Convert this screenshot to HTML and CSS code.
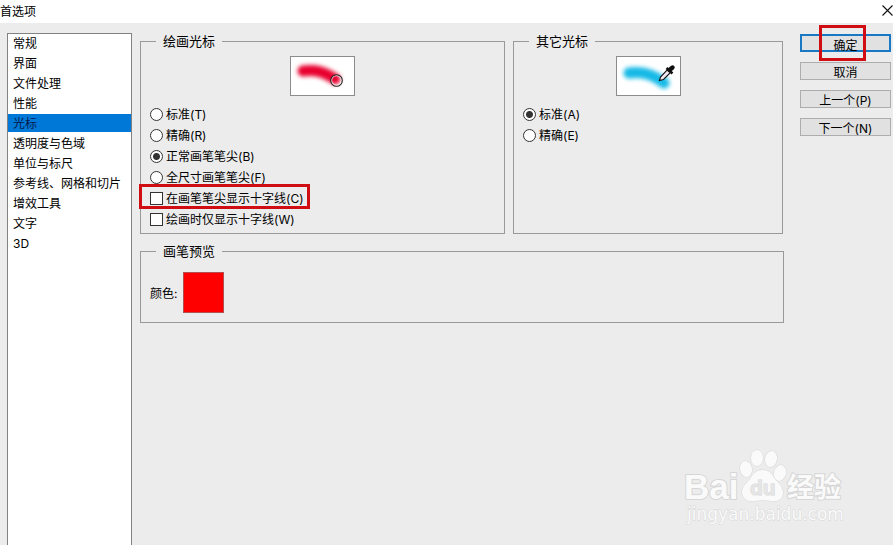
FILE: index.html
```html
<!DOCTYPE html>
<html lang="zh-CN">

<head>
    <meta charset="UTF-8">
    <title>首选项</title>
    <link rel="stylesheet" href="styles.css">
</head>

<body>
    <header class="titlebar">
        <h1>首选项</h1>
        <button type="button" class="close" aria-label="关闭">
            <svg width="11" height="11" viewBox="0 0 11 11">
                <path d="M0.5 0.5L10.5 10.5M10.5 0.5L0.5 10.5" stroke="#111" stroke-width="1.1" />
            </svg>
        </button>
    </header>

    <div class="dialog">
        <nav class="sidebar">
            <a href="#">常规</a>
            <a href="#">界面</a>
            <a href="#">文件处理</a>
            <a href="#">性能</a>
            <a href="#" class="active">光标</a>
            <a href="#">透明度与色域</a>
            <a href="#">单位与标尺</a>
            <a href="#">参考线、网格和切片</a>
            <a href="#">增效工具</a>
            <a href="#">文字</a>
            <a href="#">3D</a>
        </nav>

        <main class="panel">
            <div class="cursor-groups">
                <fieldset>
                    <legend>绘画光标</legend>
                    <svg class="preview" width="65" height="40" viewBox="0 0 65 40">
                        <defs>
                            <filter id="soft" filterUnits="userSpaceOnUse" x="0" y="0" width="65" height="40">
                                <feGaussianBlur stdDeviation="1.9" />
                            </filter>
                        </defs>
                        <rect x="0.5" y="0.5" width="64" height="39" fill="#fff" stroke="#8c8c8c" />
                        <path d="M13 15C25 13 34 16 45 23" fill="none" stroke="#e8002d" stroke-width="11" stroke-linecap="round" filter="url(#soft)" />
                        <circle cx="46.5" cy="24.5" r="4.9" fill="none" stroke="#fff" stroke-width="1" />
                        <circle cx="46.5" cy="24.5" r="5.8" fill="none" stroke="#222" stroke-width="1.1" />
                    </svg>
                    <div class="options">
                        <label><input type="radio" name="paint">标准(T)</label>
                        <label><input type="radio" name="paint">精确(R)</label>
                        <label><input type="radio" name="paint" checked>正常画笔笔尖(B)</label>
                        <label><input type="radio" name="paint">全尺寸画笔笔尖(F)</label>
                        <label class="mark-option"><input type="checkbox">在画笔笔尖显示十字线(C)</label>
                        <label><input type="checkbox">绘画时仅显示十字线(W)</label>
                    </div>
                </fieldset>

                <fieldset>
                    <legend>其它光标</legend>
                    <svg class="preview" width="65" height="40" viewBox="0 0 65 40">
                        <rect x="0.5" y="0.5" width="64" height="39" fill="#fff" stroke="#8c8c8c" />
                        <path d="M13 17C26 15 37 18 48 27" fill="none" stroke="#13b9e6" stroke-width="11" stroke-linecap="round" filter="url(#soft)" />
                        <path d="M43.5 24.5L44.5 21L51.5 13.5L54.5 16.5L47.5 23.5Z" fill="#f2e8f4" stroke="#111" stroke-width="1.1" />
                        <path d="M50.5 12L56.5 17.5" stroke="#111" stroke-width="2.4" />
                        <path d="M53.5 14L56.5 11.5" stroke="#111" stroke-width="4.4" stroke-linecap="round" />
                    </svg>
                    <div class="options">
                        <label><input type="radio" name="other" checked>标准(A)</label>
                        <label><input type="radio" name="other">精确(E)</label>
                    </div>
                </fieldset>
            </div>

            <fieldset class="brush">
                <legend>画笔预览</legend>
                <div class="color-row">
                    <label for="brushColor">颜色:</label>
                    <button type="button" id="brushColor" class="swatch"></button>
                </div>
            </fieldset>
        </main>

        <div class="actions">
            <button type="button" class="primary">确定</button>
            <button type="button">取消</button>
            <button type="button">上一个(P)</button>
            <button type="button">下一个(N)</button>
        </div>
    </div>

    <!-- 水印 -->
    <svg class="watermark" width="170" height="80" viewBox="0 0 170 80">
        <g class="wm-shape">
            <ellipse cx="71" cy="21" rx="6" ry="8" transform="rotate(-10 71 21)" />
            <ellipse cx="82" cy="10" rx="6" ry="8" />
            <ellipse cx="96" cy="11" rx="6" ry="8" transform="rotate(10 96 11)" />
            <ellipse cx="105" cy="25" rx="6" ry="8" transform="rotate(15 105 25)" />
            <path d="M88 22C81 22 78 26 75 31C71 36 67 38 67 45C68 51 73 54 80 53C85 52 91 52 96 53C103 54 108 51 108 45C108 38 104 36 100 31C97 26 94 22 88 22Z" />
        </g>
        <text class="wm-text wm-bai" x="9" y="51">Bai</text>
        <text class="wm-text wm-du" x="75" y="47">du</text>
        <text class="wm-text wm-exp" x="112" y="49">经验</text>
        <text class="wm-text wm-url" x="12" y="72">jingyan.baidu.com</text>
    </svg>
</body>

</html>
```

FILE: styles.css
```css
* {
    box-sizing: border-box;
}

body {
    margin: 0;
    height: 100vh;
    display: flex;
    flex-direction: column;
    position: relative;
    overflow: hidden;
    background-color: #ececec;
    color: #000;
    font-family: Inter, "Noto Sans CJK SC", sans-serif;
    font-size: 12px;
}

button {
    font: inherit;
    color: inherit;
    padding: 0;
}

.titlebar {
    display: flex;
    justify-content: space-between;
    align-items: center;
    height: 23px;
    padding-bottom: 3px;
    background-color: #fff;
}

h1 {
    margin: 0;
    font-size: 12px;
    font-weight: normal;
}

.close {
    display: flex;
    border: none;
    background: none;
}

.dialog {
    flex: 1;
    display: flex;
    padding: 10px 2px 0 7px;
}

.sidebar {
    width: 125px;
    margin-right: 8px;
    border: 1px solid #828282;
    border-bottom: none;
    background-color: #fff;
}

.sidebar a {
    display: block;
    height: 18px;
    margin-bottom: 2px;
    padding-left: 5px;
    line-height: 20px;
    color: #000;
    text-decoration: none;
}

.sidebar .active {
    background-color: #0078d7;
    color: #001a4d;
}

.panel {
    flex: 1;
}

.cursor-groups {
    display: grid;
    grid-template-columns: 73fr 54fr;
    gap: 8px;
    margin-bottom: 9px;
    padding-right: 1px;
}

fieldset {
    min-width: 0;
    margin: 0;
    padding: 7px 9px 3px;
    border: 1px solid #999;
}

legend {
    margin-left: 6px;
    padding: 0 7px;
    font-size: 13px;
    line-height: 16px;
}

.preview {
    display: block;
    margin: 0 auto 8px;
}

.options {
    display: flex;
    flex-direction: column;
    align-items: flex-start;
}

.options label {
    display: flex;
    align-items: center;
    gap: 3px;
    height: 21px;
    line-height: 21px;
}

.options input {
    appearance: none;
    width: 13px;
    height: 13px;
    margin: 0;
    border: 1px solid #333;
    background-color: #fff;
}

.options input[type="radio"] {
    border-radius: 50%;
}

.options input[type="radio"]:checked {
    background-image: radial-gradient(circle, #333 3px, transparent 4px);
}

/* 红色标注框 */
.mark-option,
.primary {
    position: relative;
}

.mark-option::after,
.primary::after {
    content: "";
    position: absolute;
    border: 3px solid #d00d12;
    pointer-events: none;
}

.mark-option::after {
    inset: -4px -6px 0 -11px;
}

.brush {
    padding-bottom: 9px;
}

.color-row {
    display: flex;
    align-items: center;
    gap: 6px;
    padding-top: 6px;
}

.swatch {
    width: 41px;
    height: 41px;
    border: 1px solid #b05050;
    background-color: #f00;
}

.actions {
    display: flex;
    flex-direction: column;
    gap: 10px;
    width: 91px;
    margin-left: 16px;
    padding-top: 1px;
}

.actions button {
    height: 18px;
    padding-top: 2px;
    border: 1px solid #adadad;
    background-color: #e1e1e1;
    line-height: 16px;
}

.actions .primary {
    border: 2px solid #1878c4;
}

.primary::after {
    inset: -11px 23px -11px 17px;
}

.watermark {
    position: absolute;
    right: 48px;
    bottom: 17px;
}

.wm-shape,
.wm-text {
    fill: #fafafa;
    stroke: #d6d6d6;
    stroke-width: 1px;
    paint-order: stroke;
}

.wm-text {
    stroke-width: 2px;
}

.wm-bai {
    font: bold 35px "Liberation Sans", sans-serif;
}

.wm-text.wm-du {
    font: bold 21px "Liberation Sans", sans-serif;
    fill: #e6e6e6;
    stroke-width: 1px;
}

.wm-exp {
    font: bold 27px "Noto Sans CJK SC", sans-serif;
}

.wm-text.wm-url {
    font: 17px "DejaVu Sans", sans-serif;
    stroke-width: 1px;
}
```
